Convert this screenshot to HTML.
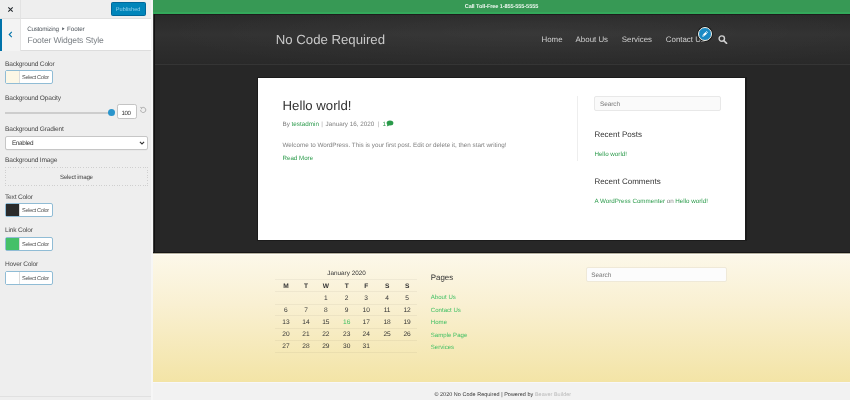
<!DOCTYPE html>
<html><head><meta charset="utf-8"><style>
html,body{margin:0;padding:0;width:850px;height:400px;overflow:hidden;background:#eee;}
body{position:relative;font-family:"Liberation Sans", sans-serif;}
.t{position:absolute;white-space:nowrap;text-rendering:geometricPrecision;}
.r{position:absolute;}
</style></head><body><div id="w" style="position:absolute;left:0;top:0;width:850px;height:400px;will-change:transform;background:#eee">
<div class="r" style="left:0px;top:0px;width:153px;height:400px;background:#eeeeee;"></div>
<div class="r" style="left:151px;top:0px;width:2px;height:400px;background:#f6f6f6;"></div>
<div class="r" style="left:0px;top:0px;width:151px;height:18.5px;background:#eeeeee;border-bottom:1px solid #e0e0e0;box-sizing:border-box;"></div>
<div class="r" style="left:20.3px;top:0px;width:1px;height:17.5px;background:#e2e2e2;"></div>
<svg class="r" style="left:7px;top:6px" width="7" height="7" viewBox="0 0 7 7"><path d="M1.3 1.3L5.7 5.7M5.7 1.3L1.3 5.7" stroke="#23282d" stroke-width="1.05"/></svg>
<div class="r" style="left:111px;top:2px;width:35px;height:14px;background:#0085ba;border-radius:1.5px;box-sizing:border-box;border:0.5px solid #006799;"></div>
<div class="t" style="left:115.80px;top:8px;font-size:5.6px;line-height:5.6px;color:#8ccfea;font-weight:normal;">Published</div>
<div class="r" style="left:0px;top:18.5px;width:151px;height:32.5px;background:#ffffff;border-bottom:1px solid #dddddd;box-sizing:border-box;"></div>
<div class="r" style="left:0px;top:18.5px;width:21.2px;height:32.5px;background:#f3f3f3;border-right:1px solid #e4e4e4;box-sizing:border-box;"></div>
<div class="r" style="left:0px;top:18.5px;width:2px;height:32px;background:#0073aa;"></div>
<svg class="r" style="left:8px;top:31px" width="5" height="7" viewBox="0 0 5 7"><path d="M3.8 0.8L1.2 3.5L3.8 6.2" fill="none" stroke="#0073aa" stroke-width="1.1"/></svg>
<div class="t" style="left:27.20px;top:27px;font-size:6.3px;line-height:6.3px;color:#50575e;font-weight:normal;letter-spacing:-0.28px;">Customizing</div>
<svg class="r" style="left:61.5px;top:27.2px" width="3" height="3.4" viewBox="0 0 3 3.4"><path d="M0.2 0.2L2.6 1.7L0.2 3.2Z" fill="#50575e"/></svg>
<div class="t" style="left:67.00px;top:27px;font-size:6.3px;line-height:6.3px;color:#50575e;font-weight:normal;letter-spacing:-0.1px;">Footer</div>
<div class="t" style="left:27.40px;top:36px;font-size:8.55px;line-height:8.55px;color:#7d8287;font-weight:normal;letter-spacing:-0.15px;">Footer Widgets Style</div>
<div class="t" style="left:5.00px;top:62px;font-size:6.6px;line-height:6.6px;color:#4a4a4a;font-weight:normal;letter-spacing:-0.2px;">Background Color</div>
<div class="r" style="left:4.9px;top:70px;width:48px;height:14px;background:#fff;border:1.25px solid #90bcd5;border-radius:2px;box-sizing:border-box;"></div>
<div class="r" style="left:6px;top:71px;width:14px;height:12px;background:#fcf7e6;border-right:1px solid #ddd;box-sizing:border-box;"></div>
<div class="t" style="left:22.00px;top:76px;font-size:5.6px;line-height:5.6px;color:#505050;font-weight:normal;letter-spacing:-0.3px;">Select Color</div>
<div class="t" style="left:5.00px;top:96px;font-size:6.6px;line-height:6.6px;color:#4a4a4a;font-weight:normal;letter-spacing:-0.2px;">Background Opacity</div>
<div class="r" style="left:5px;top:112px;width:106px;height:1.5px;background:#cdcdcd;"></div>
<div class="r" style="left:108.3px;top:109px;width:7px;height:7px;background:#2a95cc;border-radius:50%;"></div>
<div class="r" style="left:117px;top:104.2px;width:19.8px;height:14.6px;background:#fff;border:1.2px solid #c4c4c4;border-radius:2.2px;box-sizing:border-box;"></div>
<div class="t" style="left:121.60px;top:111px;font-size:6.1px;line-height:6.1px;color:#333;font-weight:normal;letter-spacing:-0.4px;">100</div>
<svg class="r" style="left:139px;top:106px" width="8" height="8" viewBox="0 0 8 8"><path d="M1.6 4 A2.6 2.6 0 1 0 2.6 1.9" fill="none" stroke="#a0a0a0" stroke-width="0.8"/><path d="M1.2 1.3 L2.9 1.9 L2.2 3.3" fill="none" stroke="#a0a0a0" stroke-width="0.7"/></svg>
<div class="t" style="left:5.00px;top:127px;font-size:6.6px;line-height:6.6px;color:#4a4a4a;font-weight:normal;letter-spacing:-0.2px;">Background Gradient</div>
<div class="r" style="left:5px;top:136px;width:143px;height:13.5px;background:#fff;border:1px solid #c6c6c6;border-radius:2px;box-sizing:border-box;box-shadow:0 0.5px 0.5px rgba(0,0,0,0.05)"></div>
<div class="t" style="left:11.90px;top:141px;font-size:6.4px;line-height:6.4px;color:#333;font-weight:normal;letter-spacing:-0.3px;">Enabled</div>
<svg class="r" style="left:138.5px;top:140.5px" width="6" height="4" viewBox="0 0 6 4"><path d="M0.9 0.9L3 3L5.1 0.9" fill="none" stroke="#333" stroke-width="1.1"/></svg>
<div class="t" style="left:5.00px;top:158px;font-size:6.6px;line-height:6.6px;color:#4a4a4a;font-weight:normal;letter-spacing:-0.2px;">Background Image</div>
<div class="r" style="left:5px;top:166.5px;width:143px;height:1px;background:repeating-linear-gradient(90deg,#cfcfcf 0 1px,transparent 1px 2.6px);"></div>
<div class="r" style="left:5px;top:185px;width:143px;height:1px;background:repeating-linear-gradient(90deg,#cfcfcf 0 1px,transparent 1px 2.6px);"></div>
<div class="r" style="left:5px;top:166.5px;width:1px;height:19.5px;background:repeating-linear-gradient(180deg,#cfcfcf 0 1px,transparent 1px 2.6px);"></div>
<div class="r" style="left:147px;top:166.5px;width:1px;height:19.5px;background:repeating-linear-gradient(180deg,#cfcfcf 0 1px,transparent 1px 2.6px);"></div>
<div class="t" style="left:60.00px;top:175px;font-size:6.2px;line-height:6.2px;color:#444;font-weight:normal;letter-spacing:-0.25px;">Select image</div>
<div class="t" style="left:5.00px;top:195px;font-size:6.6px;line-height:6.6px;color:#4a4a4a;font-weight:normal;letter-spacing:-0.2px;">Text Color</div>
<div class="r" style="left:4.9px;top:202.5px;width:48px;height:14px;background:#fff;border:1.25px solid #90bcd5;border-radius:2px;box-sizing:border-box;"></div>
<div class="r" style="left:6px;top:203.5px;width:14px;height:12px;background:#2b2b2b;border-right:1px solid #ddd;box-sizing:border-box;"></div>
<div class="t" style="left:22.00px;top:209px;font-size:5.6px;line-height:5.6px;color:#505050;font-weight:normal;letter-spacing:-0.3px;">Select Color</div>
<div class="t" style="left:5.00px;top:228px;font-size:6.6px;line-height:6.6px;color:#4a4a4a;font-weight:normal;letter-spacing:-0.2px;">Link Color</div>
<div class="r" style="left:4.9px;top:236.5px;width:48px;height:14px;background:#fff;border:1.25px solid #90bcd5;border-radius:2px;box-sizing:border-box;"></div>
<div class="r" style="left:6px;top:237.5px;width:14px;height:12px;background:#45c068;border-right:1px solid #ddd;box-sizing:border-box;"></div>
<div class="t" style="left:22.00px;top:243px;font-size:5.6px;line-height:5.6px;color:#505050;font-weight:normal;letter-spacing:-0.3px;">Select Color</div>
<div class="t" style="left:5.00px;top:262px;font-size:6.6px;line-height:6.6px;color:#4a4a4a;font-weight:normal;letter-spacing:-0.2px;">Hover Color</div>
<div class="r" style="left:4.9px;top:270.5px;width:48px;height:14px;background:#fff;border:1.25px solid #90bcd5;border-radius:2px;box-sizing:border-box;"></div>
<div class="r" style="left:6px;top:271.5px;width:14px;height:12px;background:#ffffff;border-right:1px solid #ddd;box-sizing:border-box;"></div>
<div class="t" style="left:22.00px;top:277px;font-size:5.6px;line-height:5.6px;color:#505050;font-weight:normal;letter-spacing:-0.3px;">Select Color</div>
<div class="r" style="left:0px;top:395.5px;width:151px;height:4.5px;background:#eeeeee;border-top:1px solid #e0e0e0;box-sizing:border-box;"></div>
<div class="r" style="left:153px;top:0px;width:697px;height:14px;background:#379955;"></div>
<div class="r" style="left:153px;top:12px;width:697px;height:2px;background:#33a85a;"></div>
<div class="t" style="left:464.70px;top:5px;font-size:5.6px;line-height:5.6px;color:#eef7f0;font-weight:bold;letter-spacing:-0.1px;">Call Toll-Free 1-855-555-5555</div>
<div class="r" style="left:153px;top:14px;width:697px;height:51px;background:radial-gradient(ellipse 55% 80% at 55% 35%,rgba(255,255,255,0.035),rgba(255,255,255,0) 100%),linear-gradient(180deg,#292929 0%,#313131 40%,#2c2c2c 75%,#292929 100%);"></div>
<div class="r" style="left:153px;top:14px;width:697px;height:1px;background:#1d1d1d;"></div>
<div class="r" style="left:153px;top:64px;width:697px;height:1px;background:#353535;"></div>
<div class="r" style="left:153px;top:65px;width:697px;height:188px;background:#272727;"></div>
<div class="r" style="left:153px;top:14px;width:1px;height:239px;background:#3c3c3c;"></div>
<div class="r" style="left:154px;top:14px;width:1px;height:239px;background:#111;"></div>
<div class="t" style="left:275.80px;top:33px;font-size:13.2px;line-height:13.2px;color:#c9c9c9;font-weight:normal;">No Code Required</div>
<div class="t" style="left:541.50px;top:36px;font-size:7.9px;line-height:7.9px;color:#cfcfcf;font-weight:normal;">Home</div>
<div class="t" style="left:575.60px;top:36px;font-size:7.9px;line-height:7.9px;color:#cfcfcf;font-weight:normal;">About Us</div>
<div class="t" style="left:621.80px;top:36px;font-size:7.9px;line-height:7.9px;color:#cfcfcf;font-weight:normal;">Services</div>
<div class="t" style="left:665.80px;top:36px;font-size:7.9px;line-height:7.9px;color:#cfcfcf;font-weight:normal;">Contact Us</div>
<svg class="r" style="left:717.5px;top:35px" width="10" height="9" viewBox="0 0 10 9"><circle cx="3.8" cy="3.6" r="2.7" fill="none" stroke="#d0d0d0" stroke-width="1.4"/><path d="M5.8 5.6L8.6 8.3" stroke="#d0d0d0" stroke-width="1.6" stroke-linecap="round"/></svg>
<div class="r" style="left:698px;top:27px;width:14px;height:14px;border-radius:50%;background:#1b8ac4;box-sizing:border-box;border:1.2px solid #f4f0e6;box-shadow:0 0 0 0.8px rgba(0,0,0,.6)"></div>
<svg class="r" style="left:701px;top:30px" width="8" height="8" viewBox="0 0 8 8"><path d="M1.99 4.59L4.6 1.98L6.02 3.4L3.41 6.01Z" fill="#fff"/><path d="M5.0 1.58L5.5 1.08L6.92 2.5L6.42 3.0Z" fill="#fff"/><path d="M1.85 4.8L3.2 6.15L1.3 6.7Z" fill="#fff"/></svg>
<div class="r" style="left:257px;top:77px;width:490px;height:164px;background:#1b1b1b;"></div>
<div class="r" style="left:258px;top:78px;width:487px;height:162px;background:#ffffff;"></div>
<div class="t" style="left:282.60px;top:99px;font-size:13.2px;line-height:13.2px;color:#333;font-weight:normal;">Hello world!</div>
<div class="t" style="left:282.50px;top:122px;font-size:6.3px;line-height:6.3px;color:#808080;font-weight:normal;">By <span style="color:#2a9a4a">testadmin</span></div>
<div class="t" style="left:321.30px;top:122px;font-size:6.3px;line-height:6.3px;color:#aaa;font-weight:normal;">|</div>
<div class="t" style="left:325.50px;top:122px;font-size:6.3px;line-height:6.3px;color:#808080;font-weight:normal;">January 16, 2020</div>
<div class="t" style="left:377.50px;top:122px;font-size:6.3px;line-height:6.3px;color:#aaa;font-weight:normal;">|</div>
<div class="t" style="left:382.60px;top:122px;font-size:6.3px;line-height:6.3px;color:#2a9a4a;font-weight:normal;">1</div>
<svg class="r" style="left:386px;top:120.3px" width="8" height="7" viewBox="0 0 8 7"><ellipse cx="4" cy="3" rx="3.4" ry="2.5" fill="#2a9a4a"/><path d="M1.5 4.5L0.8 6.6L3.5 5.2Z" fill="#2a9a4a"/></svg>
<div class="t" style="left:282.50px;top:143px;font-size:6.3px;line-height:6.3px;color:#808080;font-weight:normal;">Welcome to WordPress. This is your first post. Edit or delete it, then start writing!</div>
<div class="t" style="left:282.50px;top:156px;font-size:6.2px;line-height:6.2px;color:#2a9a4a;font-weight:normal;">Read More</div>
<div class="r" style="left:576.5px;top:96px;width:1px;height:65px;background:#eeeeee;"></div>
<div class="r" style="left:594.3px;top:95.8px;width:126.6px;height:14.8px;background:#fafafa;border:0.8px solid #e8e8e8;border-radius:2px;box-sizing:border-box;"></div>
<div class="t" style="left:600.00px;top:102px;font-size:6.4px;line-height:6.4px;color:#757575;font-weight:normal;letter-spacing:-0.05px;">Search</div>
<div class="t" style="left:594.40px;top:131px;font-size:8.0px;line-height:8.0px;color:#333;font-weight:normal;">Recent Posts</div>
<div class="t" style="left:594.40px;top:152px;font-size:6.24px;line-height:6.24px;color:#2a9a4a;font-weight:normal;">Hello world!</div>
<div class="t" style="left:594.40px;top:178px;font-size:8.0px;line-height:8.0px;color:#333;font-weight:normal;">Recent Comments</div>
<div class="t" style="left:594.40px;top:199px;font-size:6.24px;line-height:6.24px;color:#2a9a4a;font-weight:normal;">A WordPress Commenter <span style="color:#808080">on</span> Hello world!</div>
<div class="r" style="left:153px;top:252px;width:697px;height:1px;background:#161616;"></div>
<div class="r" style="left:153px;top:253px;width:697px;height:128.5px;background:linear-gradient(180deg,#fcf8ea 0%,#f9f0d2 40%,#f3e4a6 100%);"></div>
<div class="t" style="left:327.30px;top:271px;font-size:6.35px;line-height:6.35px;color:#333;font-weight:normal;">January 2020</div>
<div class="t" style="left:275.90px;top:284px;font-size:6.6px;line-height:6.6px;color:#333;font-weight:bold;width:20px;text-align:center;">M</div>
<div class="t" style="left:296.00px;top:284px;font-size:6.6px;line-height:6.6px;color:#333;font-weight:bold;width:20px;text-align:center;">T</div>
<div class="t" style="left:315.80px;top:284px;font-size:6.6px;line-height:6.6px;color:#333;font-weight:bold;width:20px;text-align:center;">W</div>
<div class="t" style="left:336.70px;top:284px;font-size:6.6px;line-height:6.6px;color:#333;font-weight:bold;width:20px;text-align:center;">T</div>
<div class="t" style="left:356.20px;top:284px;font-size:6.6px;line-height:6.6px;color:#333;font-weight:bold;width:20px;text-align:center;">F</div>
<div class="t" style="left:377.10px;top:284px;font-size:6.6px;line-height:6.6px;color:#333;font-weight:bold;width:20px;text-align:center;">S</div>
<div class="t" style="left:397.10px;top:284px;font-size:6.6px;line-height:6.6px;color:#333;font-weight:bold;width:20px;text-align:center;">S</div>
<div class="r" style="left:275.3px;top:279.3px;width:142px;height:0.8px;background:rgba(0,0,0,0.045);"></div>
<div class="r" style="left:275.3px;top:291.1px;width:142px;height:0.8px;background:rgba(0,0,0,0.045);"></div>
<div class="r" style="left:275.3px;top:303.6px;width:142px;height:0.8px;background:rgba(0,0,0,0.045);"></div>
<div class="r" style="left:275.3px;top:315.4px;width:142px;height:0.8px;background:rgba(0,0,0,0.045);"></div>
<div class="r" style="left:275.3px;top:327.7px;width:142px;height:0.8px;background:rgba(0,0,0,0.045);"></div>
<div class="r" style="left:275.3px;top:339.5px;width:142px;height:0.8px;background:rgba(0,0,0,0.045);"></div>
<div class="r" style="left:275.3px;top:351.6px;width:142px;height:0.8px;background:rgba(0,0,0,0.045);"></div>
<div class="t" style="left:315.80px;top:296px;font-size:6.6px;line-height:6.6px;color:#333;font-weight:normal;width:20px;text-align:center;">1</div>
<div class="t" style="left:336.70px;top:296px;font-size:6.6px;line-height:6.6px;color:#333;font-weight:normal;width:20px;text-align:center;">2</div>
<div class="t" style="left:356.20px;top:296px;font-size:6.6px;line-height:6.6px;color:#333;font-weight:normal;width:20px;text-align:center;">3</div>
<div class="t" style="left:377.10px;top:296px;font-size:6.6px;line-height:6.6px;color:#333;font-weight:normal;width:20px;text-align:center;">4</div>
<div class="t" style="left:397.10px;top:296px;font-size:6.6px;line-height:6.6px;color:#333;font-weight:normal;width:20px;text-align:center;">5</div>
<div class="t" style="left:275.90px;top:308px;font-size:6.6px;line-height:6.6px;color:#333;font-weight:normal;width:20px;text-align:center;">6</div>
<div class="t" style="left:296.00px;top:308px;font-size:6.6px;line-height:6.6px;color:#333;font-weight:normal;width:20px;text-align:center;">7</div>
<div class="t" style="left:315.80px;top:308px;font-size:6.6px;line-height:6.6px;color:#333;font-weight:normal;width:20px;text-align:center;">8</div>
<div class="t" style="left:336.70px;top:308px;font-size:6.6px;line-height:6.6px;color:#333;font-weight:normal;width:20px;text-align:center;">9</div>
<div class="t" style="left:356.20px;top:308px;font-size:6.6px;line-height:6.6px;color:#333;font-weight:normal;width:20px;text-align:center;">10</div>
<div class="t" style="left:377.10px;top:308px;font-size:6.6px;line-height:6.6px;color:#333;font-weight:normal;width:20px;text-align:center;">11</div>
<div class="t" style="left:397.10px;top:308px;font-size:6.6px;line-height:6.6px;color:#333;font-weight:normal;width:20px;text-align:center;">12</div>
<div class="t" style="left:275.90px;top:320px;font-size:6.6px;line-height:6.6px;color:#333;font-weight:normal;width:20px;text-align:center;">13</div>
<div class="t" style="left:296.00px;top:320px;font-size:6.6px;line-height:6.6px;color:#333;font-weight:normal;width:20px;text-align:center;">14</div>
<div class="t" style="left:315.80px;top:320px;font-size:6.6px;line-height:6.6px;color:#333;font-weight:normal;width:20px;text-align:center;">15</div>
<div class="t" style="left:336.70px;top:320px;font-size:6.6px;line-height:6.6px;color:#3fbf62;font-weight:normal;width:20px;text-align:center;">16</div>
<div class="t" style="left:356.20px;top:320px;font-size:6.6px;line-height:6.6px;color:#333;font-weight:normal;width:20px;text-align:center;">17</div>
<div class="t" style="left:377.10px;top:320px;font-size:6.6px;line-height:6.6px;color:#333;font-weight:normal;width:20px;text-align:center;">18</div>
<div class="t" style="left:397.10px;top:320px;font-size:6.6px;line-height:6.6px;color:#333;font-weight:normal;width:20px;text-align:center;">19</div>
<div class="t" style="left:275.90px;top:332px;font-size:6.6px;line-height:6.6px;color:#333;font-weight:normal;width:20px;text-align:center;">20</div>
<div class="t" style="left:296.00px;top:332px;font-size:6.6px;line-height:6.6px;color:#333;font-weight:normal;width:20px;text-align:center;">21</div>
<div class="t" style="left:315.80px;top:332px;font-size:6.6px;line-height:6.6px;color:#333;font-weight:normal;width:20px;text-align:center;">22</div>
<div class="t" style="left:336.70px;top:332px;font-size:6.6px;line-height:6.6px;color:#333;font-weight:normal;width:20px;text-align:center;">23</div>
<div class="t" style="left:356.20px;top:332px;font-size:6.6px;line-height:6.6px;color:#333;font-weight:normal;width:20px;text-align:center;">24</div>
<div class="t" style="left:377.10px;top:332px;font-size:6.6px;line-height:6.6px;color:#333;font-weight:normal;width:20px;text-align:center;">25</div>
<div class="t" style="left:397.10px;top:332px;font-size:6.6px;line-height:6.6px;color:#333;font-weight:normal;width:20px;text-align:center;">26</div>
<div class="t" style="left:275.90px;top:344px;font-size:6.6px;line-height:6.6px;color:#333;font-weight:normal;width:20px;text-align:center;">27</div>
<div class="t" style="left:296.00px;top:344px;font-size:6.6px;line-height:6.6px;color:#333;font-weight:normal;width:20px;text-align:center;">28</div>
<div class="t" style="left:315.80px;top:344px;font-size:6.6px;line-height:6.6px;color:#333;font-weight:normal;width:20px;text-align:center;">29</div>
<div class="t" style="left:336.70px;top:344px;font-size:6.6px;line-height:6.6px;color:#333;font-weight:normal;width:20px;text-align:center;">30</div>
<div class="t" style="left:356.20px;top:344px;font-size:6.6px;line-height:6.6px;color:#333;font-weight:normal;width:20px;text-align:center;">31</div>
<div class="t" style="left:430.80px;top:274px;font-size:7.9px;line-height:7.9px;color:#333;font-weight:normal;">Pages</div>
<div class="t" style="left:430.80px;top:295px;font-size:6.07px;line-height:6.07px;color:#3fbf62;font-weight:normal;letter-spacing:0.01px;">About Us</div>
<div class="t" style="left:430.80px;top:308px;font-size:6.07px;line-height:6.07px;color:#3fbf62;font-weight:normal;letter-spacing:0.01px;">Contact Us</div>
<div class="t" style="left:430.80px;top:320px;font-size:6.07px;line-height:6.07px;color:#3fbf62;font-weight:normal;letter-spacing:0.01px;">Home</div>
<div class="t" style="left:430.80px;top:333px;font-size:6.07px;line-height:6.07px;color:#3fbf62;font-weight:normal;letter-spacing:0.01px;">Sample Page</div>
<div class="t" style="left:430.80px;top:345px;font-size:6.07px;line-height:6.07px;color:#3fbf62;font-weight:normal;letter-spacing:0.01px;">Services</div>
<div class="r" style="left:585.6px;top:267.2px;width:141.6px;height:15px;background:#fcfcfc;border:0.8px solid #efe9d8;border-radius:2px;box-sizing:border-box;"></div>
<div class="t" style="left:591.30px;top:273px;font-size:6.4px;line-height:6.4px;color:#757575;font-weight:normal;letter-spacing:-0.05px;">Search</div>
<div class="r" style="left:153px;top:253px;width:697px;height:1px;background:#b5b09e;"></div>
<div class="r" style="left:153px;top:254px;width:697px;height:1px;background:#fffdf6;"></div>
<div class="r" style="left:153px;top:381.5px;width:697px;height:18.5px;background:#f2f2f2;"></div>
<div class="r" style="left:153px;top:381.5px;width:697px;height:1px;background:#f7f7fa;"></div>
<div class="t" style="left:434.40px;top:393px;font-size:5.45px;line-height:5.45px;color:#333;font-weight:normal;letter-spacing:0.045px;">&copy; 2020 No Code Required | Powered by <span style="color:#b8b8b8">Beaver Builder</span></div>
</div></body></html>
